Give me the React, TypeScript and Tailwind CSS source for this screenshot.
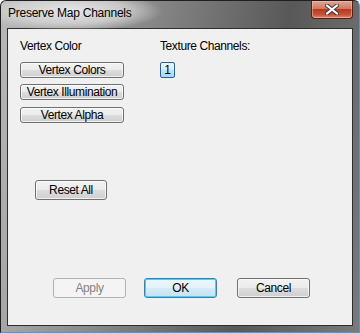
import React from "react";

const font = { fontFamily: '"Liberation Sans", Arial, sans-serif' };

const btn =
  "flex items-center justify-center rounded-[3px] border border-[#707070] bg-[linear-gradient(#f2f2f2_0%,#ebebeb_49%,#dddddd_50%,#cfcfcf_100%)] text-[12px] text-black leading-none tracking-[-0.4px] shadow-[inset_0_0_0_1px_rgba(255,255,255,0.7)]";

const SmallButton = ({ label }: { label: string }) => (
  <div className={`${btn} h-[16px] w-[104px]`}>{label}</div>
);

const CloseGlyph = () => (
  <svg width="14" height="11" viewBox="0 0 14 11">
    <path
      d="M2 1.5 L12 9.5 M12 1.5 L2 9.5"
      stroke="#3a3a3a"
      strokeWidth="4"
      strokeLinecap="square"
    />
    <path
      d="M2 1.5 L12 9.5 M12 1.5 L2 9.5"
      stroke="#ffffff"
      strokeWidth="2"
      strokeLinecap="square"
    />
  </svg>
);

export default function App() {
  return (
    <div
      className="relative flex h-[333px] w-[360px] flex-col overflow-hidden rounded-t-[6px] border border-[#1f1f1f] border-b-[#2aa8d8] border-r-[#2aa8d8] bg-[linear-gradient(100deg,#b9b9b9_0%,#8a8a8a_35%,#585858_70%,#7a7a7a_100%)]"
      style={font}
    >
      {/* Title bar */}
      <div className="relative flex h-[27px] shrink-0 items-start">
        <div className="absolute left-[-20px] top-[-10px] h-[40px] w-[180px] rounded-full bg-[radial-gradient(ellipse_at_center,rgba(235,235,235,0.95)_0%,rgba(220,220,220,0.7)_45%,rgba(200,200,200,0)_72%)]" />
        <span className="relative ml-[7px] mt-[5px] text-[12px] leading-[15px] tracking-[-0.25px] text-black">
          Preserve Map Channels
        </span>
        <div className="ml-auto mr-[6px] flex h-[18px] w-[42px] items-center justify-center rounded-b-[4px] border border-t-0 border-[#5a1e14] bg-[linear-gradient(#e0a595_0%,#d07a62_45%,#b83a1c_50%,#c8513a_80%,#e08a6a_100%)] shadow-[inset_0_0_0_1px_rgba(255,200,180,0.5)]">
          <CloseGlyph />
        </div>
      </div>

      {/* Client area */}
      <div className="mx-[6px] mb-[6px] flex flex-1 flex-col border border-[#2e2e2e] bg-[#f0f0f0] pl-[12px] pt-[10px] text-[12px] leading-[15px] tracking-[-0.4px] text-black">
        <div className="flex">
          <div className="flex w-[104px] flex-col">
            <span>Vertex Color</span>
            <div className="mt-[8px]">
              <SmallButton label="Vertex Colors" />
            </div>
            <div className="mt-[6px]">
              <SmallButton label="Vertex Illumination" />
            </div>
            <div className="mt-[7px]">
              <SmallButton label="Vertex Alpha" />
            </div>
          </div>
          <div className="ml-[36px] flex flex-col">
            <span>Texture Channels:</span>
            <div className="mt-[8px] flex h-[16px] w-[15px] items-center justify-center rounded-[2px] border border-[#2c628b] bg-[linear-gradient(#eaf6fd_0%,#d9f0fc_45%,#bee6fd_50%,#a7d9f5_100%)] text-[12px] leading-none">
              1
            </div>
          </div>
        </div>

        <div className={`${btn} ml-[15px] mt-[57px] h-[20px] w-[72px]`}>Reset All</div>

        <div className="mt-[78px] flex pl-[33px]">
          <div className="flex h-[20px] w-[73px] items-center justify-center rounded-[3px] border border-[#adb2b5] bg-[#f4f4f4] text-[12px] leading-none text-[#838383]">
            Apply
          </div>
          <div className="ml-[18px] flex h-[20px] w-[73px] items-center justify-center rounded-[3px] border border-[#3c7fb1] bg-[linear-gradient(#eaf6fd_0%,#e6f2f9_49%,#d6ebf6_50%,#c4e2f3_100%)] text-[12px] leading-none shadow-[inset_0_0_0_1px_#48d1f8]">
            OK
          </div>
          <div className={`${btn} ml-[20px] h-[20px] w-[73px]`}>Cancel</div>
        </div>
      </div>
    </div>
  );
}
